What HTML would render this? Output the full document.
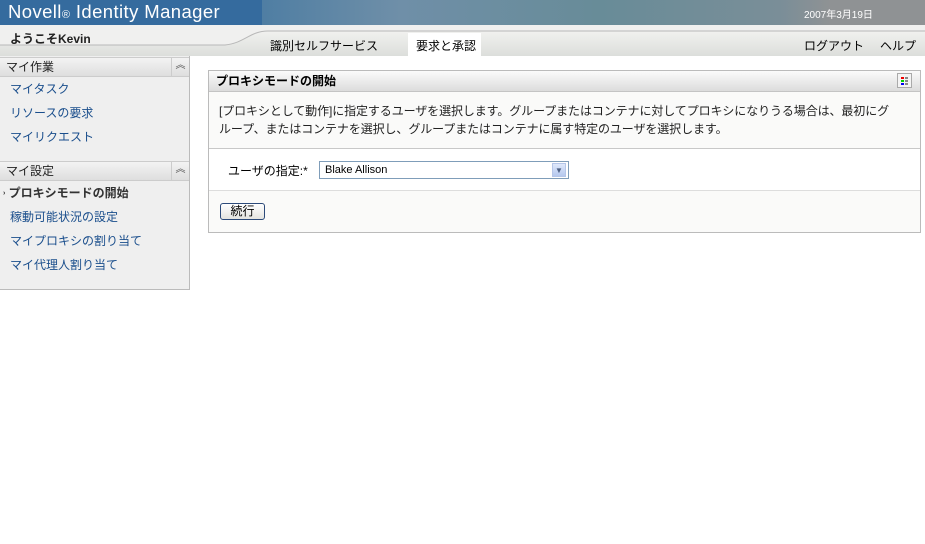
<!DOCTYPE html>
<html><head><meta charset="utf-8"><style>
*{margin:0;padding:0;box-sizing:border-box}
body{width:925px;height:544px;background:#fff;font-family:"Liberation Sans","Noto Sans CJK JP",sans-serif;font-size:12px;color:#000;position:relative;overflow:hidden}
.top{position:absolute;left:0;top:0;width:925px;height:25px;background:linear-gradient(90deg,#4f7ea3 262px,#6f8fa8 400px,#688c98 600px,#7a8e98 780px,#8f9294 830px,#8f9294)}
.topl{position:absolute;left:0;top:0;width:262px;height:25px;background:#356b9e;color:#fff;font-size:18.5px;padding:1px 0 0 8px;letter-spacing:0.4px}
.date{position:absolute;left:804px;top:6px;color:#fff;font-size:10px}
.nav{position:absolute;left:0;top:25px;width:925px;height:31px;background:linear-gradient(#f6f6f4,#dcdedb)}
.welcome{position:absolute;left:10px;top:30px;font-size:12px;font-weight:bold;color:#222}
.tab{position:absolute;top:37px;font-size:12px;color:#000}
.tabon{position:absolute;left:408px;top:33px;width:73px;height:23px;background:#fff}
.side{position:absolute;left:0;top:56px;width:190px;height:234px;background:#efefef;border-right:1px solid #bbb;border-bottom:1px solid #bbb}
.sh{position:absolute;left:0;width:189px;height:20px;background:linear-gradient(#f3f3f3,#dedede);border-top:1px solid #ccc;border-bottom:1px solid #ccc;font-size:12px;padding:1px 0 0 6px;color:#222;line-height:16px}
.sh span{position:absolute;right:0;top:0;width:18px;height:18px;border-left:1px solid #ccc;text-align:center;font-size:10px;color:#555;line-height:16px}
.lk{position:absolute;left:10px;color:#1a4e8c;font-size:12px}
.panel{position:absolute;left:208px;top:70px;width:713px;height:163px;border:1px solid #bbb;background:#fafaf9}
.ph{height:21px;background:linear-gradient(#fbfbfb,#dcdcdc);border-bottom:1px solid #c4c4c4;font-weight:bold;font-size:12px;padding:1px 0 0 7px;position:relative}
.ico{position:absolute;right:8px;top:2px;width:15px;height:15px;border:1px solid #aaa;background:#f4f4f4}
.desc{height:57px;padding:10px 0 0 10px;font-size:12px;line-height:18px;color:#222;border-bottom:1px solid #c8c8c8;letter-spacing:-0.1px;white-space:nowrap}
.row{height:42px;background:#fff;border-bottom:1px solid #ddd;position:relative}
.sel{position:absolute;left:110px;top:12px;width:250px;height:18px;border:1px solid #7f9db9;background:#fff;padding:2px 0 0 5px;font-size:11px}
.arr{position:absolute;right:2px;top:1px;width:14px;height:14px;background:linear-gradient(#dfe8fb,#b5c8ee);border:1px solid #b5c6e8;font-size:8px;color:#4d6185;text-align:center;line-height:13px}
.btn{position:absolute;left:11px;top:12px;width:45px;height:17px;border:1px solid #2c4a7a;border-radius:3px;background:linear-gradient(#fff,#e4e4e0);text-align:center;font-size:12px;line-height:15px}
</style></head><body>
<div class="top"></div>
<div class="topl">Novell<span style="font-size:11px">®</span> Identity Manager</div>
<div class="date">2007年3月19日</div>
<div class="nav"></div>
<svg style="position:absolute;left:0;top:25px" width="925" height="31"><path d="M0 0H925V6H268C250 6 245 18 225 20H0Z" fill="#f0f0ef"/><path d="M0 20H225C245 18 250 6 268 6H925" stroke="#b8b8b8" fill="none"/></svg>
<div class="welcome">ようこそKevin</div>
<div class="tabon"></div>
<div class="tab" style="left:270px">識別セルフサービス</div>
<div class="tab" style="left:416px">要求と承認</div>
<div class="tab" style="left:804px">ログアウト</div>
<div class="tab" style="left:880px">ヘルプ</div>
<div class="side">
<div class="sh" style="top:1px">マイ作業<span>︽</span></div>
<div class="lk" style="top:24px">マイタスク</div>
<div class="lk" style="top:48px">リソースの要求</div>
<div class="lk" style="top:72px">マイリクエスト</div>
<div class="sh" style="top:105px">マイ設定<span>︽</span></div>
<div class="lk" style="top:128px;left:3px;color:#333;font-weight:bold"><span style="font-size:7px;vertical-align:2px">›</span> プロキシモードの開始</div>
<div class="lk" style="top:152px">稼動可能状況の設定</div>
<div class="lk" style="top:176px">マイプロキシの割り当て</div>
<div class="lk" style="top:200px">マイ代理人割り当て</div>
</div>
<div class="panel">
<div class="ph">プロキシモードの開始<div class="ico"><svg width="13" height="13"><rect x="3" y="3" width="3" height="2" fill="#e00"/><rect x="3" y="6" width="3" height="2" fill="#0c0"/><rect x="3" y="9" width="3" height="2" fill="#00e"/><rect x="7" y="3" width="3" height="2" fill="#888"/><rect x="7" y="6" width="3" height="2" fill="#888"/><rect x="7" y="9" width="3" height="2" fill="#888"/></svg></div></div>
<div class="desc">[プロキシとして動作]に指定するユーザを選択します。グループまたはコンテナに対してプロキシになりうる場合は、最初にグ<br>ループ、またはコンテナを選択し、グループまたはコンテナに属す特定のユーザを選択します。</div>
<div class="row"><div style="position:absolute;left:19px;top:13px">ユーザの指定:*</div><div class="sel">Blake Allison<div class="arr">▼</div></div></div>
<div style="position:relative"><div class="btn">続行</div></div>
</div>
</body></html>
